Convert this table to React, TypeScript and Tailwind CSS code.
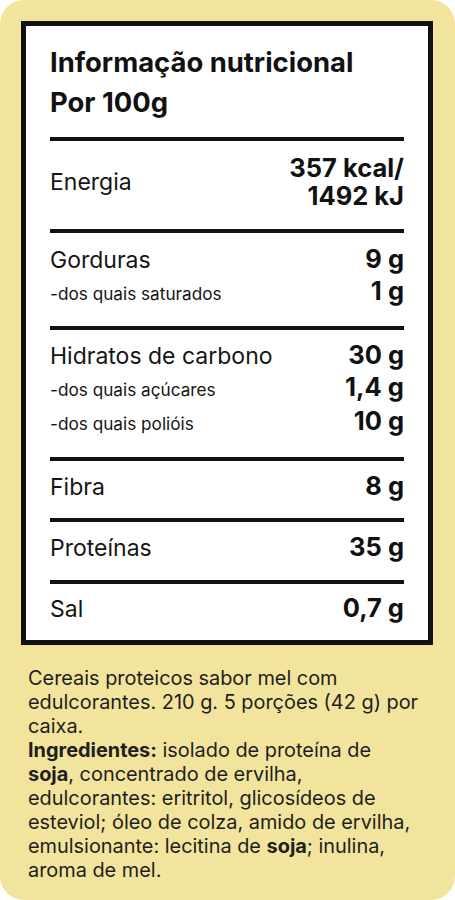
import React from "react";

const font = { fontFamily: "Inter, 'Noto Sans', sans-serif" };

function Row({ label, value, sub = false }: { label: string; value: string; sub?: boolean }) {
  return (
    <div className="flex items-baseline justify-between">
      <span
        className={
          sub
            ? "text-[17.2px] leading-[28px] text-[#151515]"
            : "text-[23px] leading-[28px] text-[#151515]"
        }
      >
        {label}
      </span>
      <span className="text-[25.5px] leading-[28px] font-bold text-[#111]">{value}</span>
    </div>
  );
}

function Divider() {
  return <div className="h-[4px] bg-[#111]" />;
}

export default function App() {
  return (
    <div className="w-[455px] h-[900px] bg-white" style={font}>
      <div className="w-[455px] h-[900px] rounded-[24px] bg-[#f2e49c] pt-[21px]">
        <div className="mx-[21px] w-[412px] border-[5px] border-[#111] bg-white px-6">
          <div className="pt-[16px] pb-[15px] text-[27.4px] leading-[40px] font-bold text-[#111]">
            <div>Informação nutricional</div>
            <div>Por 100g</div>
          </div>
          <Divider />
          <div className="flex items-center justify-between pt-[13px] pb-[19px]">
            <span className="text-[23px] leading-[28px] text-[#151515]">Energia</span>
            <div className="text-right text-[25.5px] leading-[28px] font-bold text-[#111]">
              <div>357 kcal/</div>
              <div>1492 kJ</div>
            </div>
          </div>
          <Divider />
          <div className="flex flex-col gap-[3px] pt-[12px] pb-[18px]">
            <Row label="Gorduras" value="9 g" />
            <Row label="-dos quais saturados" value="1 g" sub />
          </div>
          <Divider />
          <div className="flex flex-col gap-[3px] pt-[11px] pb-[19px]">
            <Row label="Hidratos de carbono" value="30 g" />
            <Row label="-dos quais açúcares" value="1,4 g" sub />
            <Row label="-dos quais polióis" value="10 g" sub />
          </div>
          <Divider />
          <div className="pt-[11px] pb-[17px]">
            <Row label="Fibra" value="8 g" />
          </div>
          <Divider />
          <div className="pt-[11px] pb-[18px]">
            <Row label="Proteínas" value="35 g" />
          </div>
          <Divider />
          <div className="pt-[10px] pb-[17px]">
            <Row label="Sal" value="0,7 g" />
          </div>
        </div>
        <p className="mt-[21px] pl-[28px] text-[19.9px] leading-[24px] text-[#1e1e1e]">
          Cereais proteicos sabor mel com<br />
          edulcorantes. 210 g. 5 porções (42 g) por<br />
          caixa.<br />
          <b>Ingredientes:</b> isolado de proteína de<br />
          <b>soja</b>, concentrado de ervilha,<br />
          edulcorantes: eritritol, glicosídeos de<br />
          esteviol; óleo de colza, amido de ervilha,<br />
          emulsionante: lecitina de <b>soja</b>; inulina,<br />
          aroma de mel.
        </p>
      </div>
    </div>
  );
}
